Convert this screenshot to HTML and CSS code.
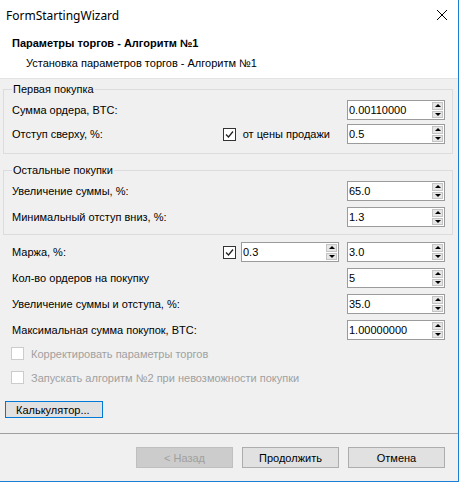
FILE: index.html
```html
<!DOCTYPE html>
<html lang="ru">
<head>
    <meta charset="UTF-8" />
    <title>FormStartingWizard</title>
    <link rel="stylesheet" href="styles.css">
</head>
<body>
    <div class="window">
        <div class="titlebar">
            <span class="title">FormStartingWizard</span>
            <svg class="close" width="12" height="12" viewBox="0 0 12 12">
                <path d="M1 1 L11 11 M11 1 L1 11" stroke="#000" stroke-width="1" fill="none" />
            </svg>
        </div>
        <div class="header">
            <div class="header-title">Параметры торгов - Алгоритм №1</div>
            <div class="header-sub">Установка параметров торгов - Алгоритм №1</div>
        </div>
        <div class="content">
            <fieldset class="group group-first">
                <legend>Первая покупка</legend>
                <div class="row">
                    <span class="label">Сумма ордера, BTC:</span>
                    <div class="spin"><span class="value">0.00110000</span><div class="arrows"><div class="arr"><i class="up"></i></div><div class="arr"><i class="down"></i></div></div></div>
                </div>
                <div class="row row-tight">
                    <span class="label">Отступ сверху, %:</span>
                    <span class="check checked"><svg width="9" height="9" viewBox="0 0 9 9"><path d="M1 4.5 L3.5 7 L8 1.5" stroke="#222" stroke-width="1.3" fill="none" /></svg></span>
                    <span class="check-text">от цены продажи</span>
                    <div class="spin"><span class="value">0.5</span><div class="arrows"><div class="arr"><i class="up"></i></div><div class="arr"><i class="down"></i></div></div></div>
                </div>
            </fieldset>

            <fieldset class="group group-second">
                <legend>Остальные покупки</legend>
                <div class="row">
                    <span class="label">Увеличение суммы, %:</span>
                    <div class="spin"><span class="value">65.0</span><div class="arrows"><div class="arr"><i class="up"></i></div><div class="arr"><i class="down"></i></div></div></div>
                </div>
                <div class="row">
                    <span class="label">Минимальный отступ вниз, %:</span>
                    <div class="spin"><span class="value">1.3</span><div class="arrows"><div class="arr"><i class="up"></i></div><div class="arr"><i class="down"></i></div></div></div>
                </div>
            </fieldset>

            <div class="plain">
                <div class="row">
                    <span class="label">Маржа, %:</span>
                    <span class="check checked"><svg width="9" height="9" viewBox="0 0 9 9"><path d="M1 4.5 L3.5 7 L8 1.5" stroke="#222" stroke-width="1.3" fill="none" /></svg></span>
                    <div class="spin spin-left"><span class="value">0.3</span><div class="arrows"><div class="arr"><i class="up"></i></div><div class="arr"><i class="down"></i></div></div></div>
                    <div class="spin"><span class="value">3.0</span><div class="arrows"><div class="arr"><i class="up"></i></div><div class="arr"><i class="down"></i></div></div></div>
                </div>
                <div class="row">
                    <span class="label">Кол-во ордеров на покупку</span>
                    <div class="spin"><span class="value">5</span><div class="arrows"><div class="arr"><i class="up"></i></div><div class="arr"><i class="down"></i></div></div></div>
                </div>
                <div class="row">
                    <span class="label">Увеличение суммы и отступа, %:</span>
                    <div class="spin"><span class="value">35.0</span><div class="arrows"><div class="arr"><i class="up"></i></div><div class="arr"><i class="down"></i></div></div></div>
                </div>
                <div class="row">
                    <span class="label">Максимальная сумма покупок, BTC:</span>
                    <div class="spin"><span class="value">1.00000000</span><div class="arrows"><div class="arr"><i class="up"></i></div><div class="arr"><i class="down"></i></div></div></div>
                </div>
            </div>

            <div class="options">
                <label class="option"><span class="check disabled"></span>Корректировать параметры торгов</label>
                <label class="option"><span class="check disabled"></span>Запускать алгоритм №2 при невозможности покупки</label>
            </div>

            <div class="calc-line">
                <button class="btn btn-focus">Калькулятор...</button>
            </div>
        </div>
        <div class="footer">
            <button class="btn btn-nav" disabled>&lt; Назад</button>
            <button class="btn btn-nav">Продолжить</button>
            <button class="btn btn-nav">Отмена</button>
        </div>
    </div>
</body>
</html>
```

FILE: styles.css
```css
body {
    margin: 0;
    padding: 0;
    background: #fff;
    font-family: "Liberation Sans", Arial, sans-serif;
    font-size: 11px;
    color: #000;
}

.window {
    width: 458px;
    height: 481px;
    border-right: 1px solid #1a7fd4;
    border-bottom: 1px solid #1a7fd4;
    background: #f0f0f0;
    display: flex;
    flex-direction: column;
}

.titlebar {
    height: 30px;
    background: #fff;
    display: flex;
    align-items: center;
    justify-content: space-between;
    padding: 0 10px 0 6px;
}

    .titlebar .title {
        font-family: "Noto Sans", sans-serif;
        font-size: 12px;
    }

.close {
    margin-top: -1px;
}

.header {
    height: 48px;
    background: #fff;
    border-bottom: 1px solid #e3e3e3;
    padding-left: 12px;
}

.header-title {
    font-weight: bold;
    margin-top: 6px;
    line-height: 14px;
}

.header-sub {
    margin-top: 6px;
    padding-left: 14px;
    line-height: 14px;
}

.content {
    flex: 1;
    padding-top: 4px;
}

.group {
    margin: 0 5px 0 3px;
    border: 1px solid #dcdcdc;
    padding: 4px 7px 9px 8px;
}

    .group legend {
        padding: 0 1px;
        margin-left: 0;
        line-height: 13px;
    }

.group-second {
    margin-top: 10px;
    padding-bottom: 7px;
}

    .group-second .row + .row {
        margin-top: 6px;
    }

.group-first .row-tight {
    margin-top: 4px;
}

.row {
    display: flex;
    align-items: center;
    height: 20px;
}

.label {
    flex: 1;
}

.plain {
    padding: 7px 13px 0 12px;
}

    .plain .row + .row {
        margin-top: 6px;
    }

.spin {
    width: 96px;
    height: 18px;
    border: 1px solid #9b9b9b;
    background: #fff;
    display: flex;
}

.spin-left {
    margin: 0 8px 0 5px;
}

.value {
    flex: 1;
    padding-left: 1px;
    line-height: 18px;
}

.arrows {
    width: 11px;
    padding: 1px 1px 1px 0;
    display: flex;
    flex-direction: column;
    gap: 1px;
}

.arr {
    flex: 1;
    background: #e6e6e6;
    border: 1px solid #c4c4c4;
    display: flex;
    align-items: center;
    justify-content: center;
}

.up {
    border-left: 3px solid transparent;
    border-right: 3px solid transparent;
    border-bottom: 3px solid #000;
}

.down {
    border-left: 3px solid transparent;
    border-right: 3px solid transparent;
    border-top: 3px solid #000;
}

.check {
    width: 11px;
    height: 11px;
    border: 1px solid #333;
    background: #fff;
    display: inline-flex;
    align-items: center;
    justify-content: center;
}

.check-text {
    margin: 0 17px 0 7px;
}

.check.disabled {
    border-color: #cccccc;
    margin-right: 7px;
}

.options {
    padding: 7px 0 0 11px;
}

.option {
    display: flex;
    align-items: center;
    height: 13px;
    color: #a0a0a0;
}

    .option + .option {
        margin-top: 11px;
    }

.calc-line {
    padding: 17px 0 0 5px;
}

.btn {
    font-family: "Liberation Sans", Arial, sans-serif;
    font-size: 11px;
    color: #000;
    background: #e1e1e1;
    border: 1px solid #adadad;
    padding: 0;
}

.btn-focus {
    width: 98px;
    height: 17px;
    border-color: #0078d7;
    text-align: left;
    padding-left: 10px;
}

.footer {
    height: 48px;
    flex-shrink: 0;
    border-top: 1px solid #a0a0a0;
    display: flex;
    justify-content: flex-end;
    align-items: flex-start;
    gap: 9px;
    padding: 13px 13px 0 0;
    box-sizing: border-box;
}

.btn-nav {
    width: 97px;
    height: 21px;
}

    .btn-nav:disabled {
        background: #cccccc;
        border-color: #bfbfbf;
        color: #a0a0a0;
    }
```
